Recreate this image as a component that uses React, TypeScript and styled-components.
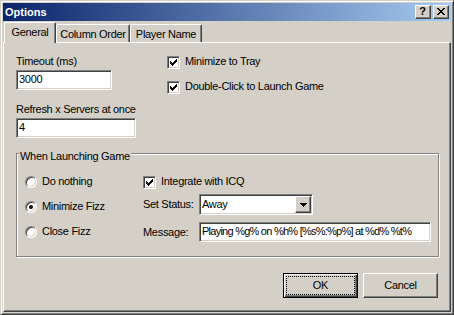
import * as React from 'react';
import styled, { createGlobalStyle } from 'styled-components';

const FACE = '#d4d0c8';
const SHADOW = '#808080';
const DARK = '#404040';

const GlobalStyle = createGlobalStyle`
  html, body {
    margin: 0;
    padding: 0;
    background: ${FACE};
  }
`;

const WindowDiv = styled.div`
  width: 454px;
  height: 315px;
  box-sizing: border-box;
  display: flex;
  flex-direction: column;
  padding: 2px;
  background: ${FACE};
  border: 1px solid;
  border-color: ${FACE} ${DARK} ${DARK} ${FACE};
  box-shadow: inset 1px 1px #fff, inset -1px -1px ${SHADOW};
  color: #000;
  font-family: 'Liberation Sans', Arial, sans-serif;
  font-size: 11px;
  line-height: 13px;
  letter-spacing: -0.3px;
`;

const TitleBar = styled.div`
  height: 18px;
  margin-bottom: 1px;
  display: flex;
  align-items: center;
  gap: 2px;
  padding: 0 2px;
  background: linear-gradient(to right, #0a246a, #a6caf0);
`;
const TitleText = styled.div`
  flex: 1;
  color: #fff;
  font-weight: bold;
  letter-spacing: 0;
`;
const CaptionButton = styled.div`
  width: 16px;
  height: 14px;
  box-sizing: border-box;
  display: flex;
  align-items: center;
  justify-content: center;
  background: ${FACE};
  border: 1px solid;
  border-color: #fff ${DARK} ${DARK} #fff;
  box-shadow: inset -1px -1px ${SHADOW};
  font-weight: bold;
  letter-spacing: 0;
  padding: 0 1px 1px 0;
`;

const TabStrip = styled.div`
  display: flex;
  align-items: flex-end;
  height: 20px;
  padding-left: 1px;
`;
const Tab = styled.div<{ $active?: boolean; $width: number }>`
  position: relative;
  z-index: ${p => (p.$active ? 1 : 0)};
  box-sizing: border-box;
  width: ${p => p.$width}px;
  height: ${p => (p.$active ? 21 : 18)}px;
  margin-bottom: ${p => (p.$active ? -1 : 0)}px;
  padding-top: 3px;
  text-align: center;
  white-space: nowrap;
  background: ${FACE};
  border: 1px solid;
  border-bottom: none;
  border-color: #fff ${DARK} transparent #fff;
  border-radius: 2px 2px 0 0;
  box-shadow: inset -1px 0 ${SHADOW};
`;

const Panel = styled.div`
  flex: 1;
  display: flex;
  flex-direction: column;
  background: ${FACE};
  border: 1px solid;
  border-color: #fff ${DARK} ${DARK} #fff;
  box-shadow: inset -1px -1px ${SHADOW};
  padding: 12px 11px 0 12px;
`;

const TopSection = styled.div`
  display: grid;
  grid-template-columns: 151px 1fr;
`;
const Column = styled.div<{ $gap?: number }>`
  display: flex;
  flex-direction: column;
  gap: ${p => p.$gap ?? 0}px;
`;
const FieldLabel = styled.div<{ $top?: number }>`
  margin-top: ${p => p.$top ?? 0}px;
  height: 13px;
  white-space: nowrap;
`;

const Sunken = styled.div`
  box-sizing: border-box;
  background: #fff;
  border: 1px solid;
  border-color: ${SHADOW} #fff #fff ${SHADOW};
  box-shadow: inset 1px 1px ${DARK}, inset -1px -1px ${FACE};
`;
const Edit = styled(Sunken)<{ $width?: number; $top?: number; $tight?: boolean }>`
  width: ${p => (p.$width ? `${p.$width}px` : 'auto')};
  height: 20px;
  margin-top: ${p => p.$top ?? 0}px;
  padding: 2px 2px 0 2px;
  white-space: nowrap;
  overflow: hidden;
  letter-spacing: ${p => (p.$tight ? '-0.75px' : 'inherit')};
`;

const OptionRow = styled.div`
  display: flex;
  align-items: flex-start;
  gap: 5px;
  height: 13px;
  white-space: nowrap;
`;
const CheckBox = styled(Sunken)`
  width: 13px;
  height: 13px;
  margin-top: 1px;
  padding: 2px;
  flex: none;
  display: flex;
`;
const Radio = styled.span<{ $checked?: boolean }>`
  box-sizing: border-box;
  width: 12px;
  height: 12px;
  margin-top: 1px;
  flex: none;
  border-radius: 50%;
  border: 1px solid;
  border-color: ${SHADOW} #fff #fff ${SHADOW};
  box-shadow: inset 1px 1px ${DARK}, inset -1px -1px ${FACE};
  background: #fff;
  display: flex;
  align-items: center;
  justify-content: center;
  &::after {
    content: '';
    width: 4px;
    height: 4px;
    border-radius: 50%;
    background: ${p => (p.$checked ? '#000' : 'transparent')};
  }
`;

const GroupBox = styled.div`
  margin-top: 15px;
  display: flex;
  flex-direction: column;
  border: 1px solid ${SHADOW};
  box-shadow: inset 1px 1px #fff, 1px 1px #fff;
  padding: 0 7px 14px 8px;
`;
const GroupLegend = styled.div`
  align-self: flex-start;
  margin: -4px 0 0 -6px;
  padding: 0 1px;
  background: ${FACE};
  white-space: nowrap;
`;
const GroupBody = styled.div`
  margin-top: 12px;
  display: grid;
  grid-template-columns: 118px 1fr;
`;
const FieldRow = styled.div<{ $top: number }>`
  margin-top: ${p => p.$top}px;
  display: grid;
  grid-template-columns: 56px 1fr;
  align-items: center;
  white-space: nowrap;
`;
const Combo = styled(Sunken)`
  width: 114px;
  height: 21px;
  padding: 1px 1px 1px 2px;
  display: flex;
  align-items: center;
  justify-content: space-between;
`;
const DropButton = styled.div`
  width: 16px;
  height: 17px;
  box-sizing: border-box;
  display: flex;
  align-items: center;
  justify-content: center;
  background: ${FACE};
  border: 1px solid;
  border-color: #fff ${DARK} ${DARK} #fff;
  box-shadow: inset -1px -1px ${SHADOW};
`;

const ButtonRow = styled.div`
  margin-top: 16px;
  display: flex;
  justify-content: flex-end;
  gap: 5px;
  padding-right: 1px;
`;
const PushButton = styled.div<{ $default?: boolean }>`
  width: 75px;
  height: 25px;
  box-sizing: border-box;
  display: flex;
  align-items: center;
  justify-content: center;
  padding: ${p => (p.$default ? '2px' : '0 0 1px 0')};
  background: ${FACE};
  border: 1px solid;
  border-color: ${p => (p.$default ? '#000' : `#fff ${DARK} ${DARK} #fff`)};
  box-shadow: ${p =>
    p.$default
      ? `inset 1px 1px #fff, inset -1px -1px ${DARK}, inset -2px -2px ${SHADOW}`
      : `inset -1px -1px ${SHADOW}`};
`;
const FocusRing = styled.div`
  flex: 1;
  align-self: stretch;
  display: flex;
  align-items: center;
  justify-content: center;
  padding-bottom: 1px;
  border: 1px dotted #000;
`;

const CheckMark = () => (
  <svg width="7" height="7" viewBox="0 0 7 7" shapeRendering="crispEdges">
    <path d="M6 0h1v1h-1z M5 1h2v1h-2z M0 2h1v1h-1z M4 2h3v1h-3z M0 3h2v1h-2z M3 3h3v1h-3z M0 4h5v1h-5z M1 5h3v1h-3z M2 6h1v1h-1z" fill="#000" />
  </svg>
);

const CloseGlyph = () => (
  <svg width="8" height="7" viewBox="0 0 8 7" shapeRendering="crispEdges">
    <path d="M0 0h2v1h-2z M6 0h2v1h-2z M1 1h2v1h-2z M5 1h2v1h-2z M2 2h4v1h-4z M3 3h2v1h-2z M2 4h4v1h-4z M1 5h2v1h-2z M5 5h2v1h-2z M0 6h2v1h-2z M6 6h2v1h-2z" fill="#000" />
  </svg>
);

const ArrowGlyph = () => (
  <svg width="7" height="4" viewBox="0 0 7 4" shapeRendering="crispEdges">
    <path d="M0 0h7v1h-7z M1 1h5v1h-5z M2 2h3v1h-3z M3 3h1v1h-1z" fill="#000" />
  </svg>
);

const Check = ({ label }: { label: string }) => (
  <OptionRow>
    <CheckBox>
      <CheckMark />
    </CheckBox>
    <span>{label}</span>
  </OptionRow>
);

const RadioOption = ({ label, checked }: { label: string; checked?: boolean }) => (
  <OptionRow>
    <Radio $checked={checked} />
    <span>{label}</span>
  </OptionRow>
);

const App = () => {
  return (
    <>
      <GlobalStyle />
      <WindowDiv>
        <TitleBar>
          <TitleText>Options</TitleText>
          <CaptionButton>?</CaptionButton>
          <CaptionButton>
            <CloseGlyph />
          </CaptionButton>
        </TitleBar>
        <TabStrip>
          <Tab $active $width={52}>General</Tab>
          <Tab $width={74}>Column Order</Tab>
          <Tab $width={72}>Player Name</Tab>
        </TabStrip>
        <Panel>
          <TopSection>
            <Column>
              <FieldLabel>Timeout (ms)</FieldLabel>
              <Edit $width={96} $top={2}>3000</Edit>
              <FieldLabel $top={13}>Refresh x Servers at once</FieldLabel>
              <Edit $width={120} $top={2}>4</Edit>
            </Column>
            <Column $gap={12}>
              <Check label="Minimize to Tray" />
              <Check label="Double-Click to Launch Game" />
            </Column>
          </TopSection>
          <GroupBox>
            <GroupLegend>When Launching Game</GroupLegend>
            <GroupBody>
              <Column $gap={12}>
                <RadioOption label="Do nothing" />
                <RadioOption label="Minimize Fizz" checked />
                <RadioOption label="Close Fizz" />
              </Column>
              <Column>
                <Check label="Integrate with ICQ" />
                <FieldRow $top={6}>
                  <span>Set Status:</span>
                  <Combo>
                    <span>Away</span>
                    <DropButton>
                      <ArrowGlyph />
                    </DropButton>
                  </Combo>
                </FieldRow>
                <FieldRow $top={7}>
                  <span>Message:</span>
                  <Edit $tight>Playing %g% on %h% [%s%:%p%] at %d% %t%</Edit>
                </FieldRow>
              </Column>
            </GroupBody>
          </GroupBox>
          <ButtonRow>
            <PushButton $default>
              <FocusRing>OK</FocusRing>
            </PushButton>
            <PushButton>Cancel</PushButton>
          </ButtonRow>
        </Panel>
      </WindowDiv>
    </>
  );
};

export default App;
